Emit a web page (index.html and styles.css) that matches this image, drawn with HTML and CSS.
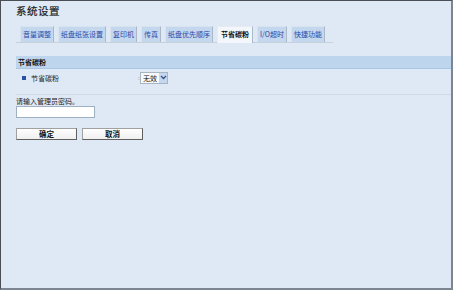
FILE: index.html
```html
<!DOCTYPE html>
<html lang="zh">
<head>
<meta charset="utf-8">
<link rel="stylesheet" href="styles.css">
</head>
<body>
<div class="frame">
  <h1 class="title">系统设置</h1>
  <div class="tabs">
    <span class="tab">音量调整</span>
    <span class="tab">纸盘纸张设置</span>
    <span class="tab">复印机</span>
    <span class="tab">传真</span>
    <span class="tab">纸盘优先顺序</span>
    <span class="tab active">节省碳粉</span>
    <span class="tab">I/O超时</span>
    <span class="tab">快捷功能</span>
  </div>
  <div class="section">节省碳粉</div>
  <div class="row">
    <span class="label"><span class="bullet"></span>节省碳粉</span>
    <span class="dots">:</span>
    <span class="select"><span class="sel-text">无效</span><span class="sel-btn"><svg width="7" height="5" viewBox="0 0 7 5"><path d="M1 1 L3.5 3.5 L6 1" fill="none" stroke="#3a4f8a" stroke-width="1.3"/></svg></span></span>
  </div>
  <div class="sep"></div>
  <div class="pw-label">请输入管理员密码。</div>
  <div class="input"></div>
  <div class="buttons">
    <span class="btn">确定</span>
    <span class="btn">取消</span>
  </div>
</div>
</body>
</html>
```
FILE: styles.css
```css
html, body { margin: 0; padding: 0; }
body {
  width: 453px;
  height: 290px;
  overflow: hidden;
  font-family: "Noto Sans CJK SC", "Liberation Sans", sans-serif;
}
.frame {
  box-sizing: border-box;
  width: 453px;
  height: 290px;
  background: #dee9f5;
  border-left: 1px solid #4a4f55;
  border-top: 1px solid #4a4f55;
  border-right: 2px solid #7d8690;
  border-bottom: 2px solid #7d8690;
  padding: 4px 0 0 15px;
}
.title {
  margin: 0;
  font-size: 10.5px;
  line-height: 12px;
  font-weight: normal;
  color: #1a1a1a;
  letter-spacing: 0.5px;
  -webkit-text-stroke: 0.2px #1a1a1a;
}
.tabs {
  display: flex;
  align-items: flex-end;
  gap: 4px;
  margin-top: 9px;
  padding-left: 4px;
  width: 313px;
  border-bottom: 1px solid #c6d1dc;
  height: 16px;
}
.tab {
  box-sizing: border-box;
  height: 16px;
  padding: 0 2px;
  background: #c3d7ee;
  border: 1px solid #d9e3ee;
  border-right-color: #aab8c7;
  border-bottom: none;
  font-size: 7px;
  line-height: 15px;
  color: #2b49a8;
  white-space: nowrap;
}
.tab.active {
  background: #f3f6fa;
  color: #111;
  font-weight: bold;
  height: 17px;
  padding: 0 3px;
  margin-bottom: -1px;
  border-color: #e6ecf2;
  border-right-color: #aab8c7;
}
.section {
  margin-top: 13px;
  height: 12px;
  background: #bdd6ed;
  border-bottom: 1px solid #a9c6e2;
  font-size: 7px;
  font-weight: bold;
  line-height: 12px;
  padding-left: 2px;
  color: #111;
}
.row {
  display: flex;
  align-items: center;
  height: 15px;
  margin-top: 1px;
  font-size: 7px;
  color: #222;
}
.label {
  display: flex;
  align-items: center;
  width: 116px;
  padding-left: 6px;
}
.bullet {
  width: 4px;
  height: 4px;
  background: #2d4fa6;
  margin-right: 5px;
}
.dots {
  color: #8a96a4;
  width: 3px;
  font-size: 6px;
}
.select {
  display: flex;
  align-items: center;
  box-sizing: border-box;
  height: 12px;
  width: 28px;
  border: 1px solid #a6b4c3;
  background: #f7f9fb;
  margin-left: -1px;
}
.sel-text {
  font-size: 7px;
  color: #111;
  padding-left: 2px;
  width: 17px;
}
.sel-btn {
  display: flex;
  align-items: center;
  justify-content: center;
  width: 8px;
  height: 10px;
  background: #c5d6ef;
}
.sep {
  margin-top: 9px;
  height: 1px;
  background: #cfdae6;
}
.pw-label {
  margin-top: 2px;
  font-size: 7px;
  line-height: 9px;
  color: #222;
}
.input {
  margin-top: 0;
  box-sizing: border-box;
  width: 79px;
  height: 12px;
  background: #fff;
  border: 1px solid #9fb0c2;
}
.buttons {
  display: flex;
  gap: 5px;
  margin-top: 10px;
}
.btn {
  box-sizing: border-box;
  width: 61px;
  height: 12px;
  background: linear-gradient(#ffffff, #f0f0f0);
  border: 1px solid #a0a0a0;
  border-right-color: #606060;
  border-bottom-color: #606060;
  font-size: 7.5px;
  font-weight: bold;
  line-height: 10px;
  text-align: center;
  color: #111;
}
```
